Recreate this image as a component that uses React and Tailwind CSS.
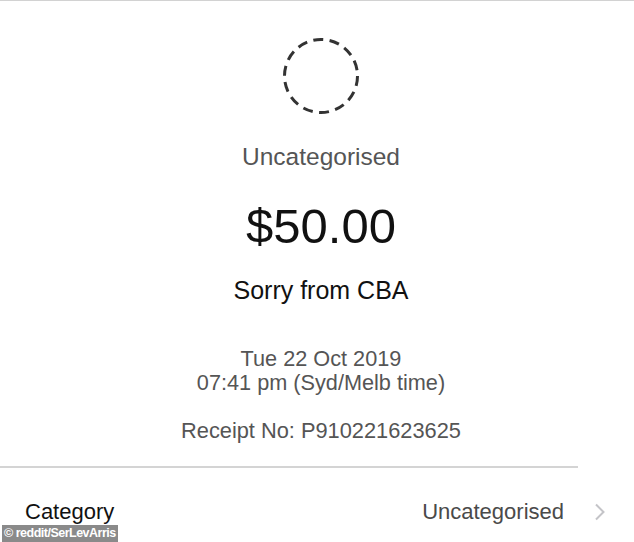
import React from "react";

const Row = ({ label, value }) => (
  <div className="flex items-center h-[28px] pl-[25px] pr-[28px]">
    <span className="text-[22px] leading-[28px] text-[#111]">{label}</span>
    <span className="ml-auto text-[22px] leading-[28px] text-[#4a4a4a]">{value}</span>
    <svg width="12" height="18" viewBox="0 0 12 18" className="ml-[30px]">
      <path d="M2 1.5 L9.5 9 L2 16.5" fill="none" stroke="#c4c4c8" strokeWidth="2" />
    </svg>
  </div>
);

const App = () => {
  return (
    <div
      className="relative w-[634px] h-[542px] overflow-hidden bg-white border-t border-[#d2d2d2]"
      style={{ fontFamily: '"Liberation Sans", Arial, sans-serif' }}
    >
      <div className="flex flex-col items-center pl-[8px]">
        {/* empty category icon */}
        <svg width="80" height="80" viewBox="0 0 80 80" className="mt-[35px]">
          <circle
            cx="40"
            cy="40"
            r="36.5"
            fill="none"
            stroke="#333"
            strokeWidth="3"
            strokeDasharray="10 6.4"
          />
        </svg>
        <div className="mt-[27px] text-[24.5px] leading-[28px] text-[#555]">Uncategorised</div>
        <div className="mt-[27px] text-[49px] leading-[56px] text-[#111]">$50.00</div>
        <div className="mt-[21px] text-[25px] leading-[30px] text-[#111]">Sorry from CBA</div>
        <div className="mt-[42px] text-[21.7px] leading-[24px] text-[#555] text-center">
          <div>Tue 22 Oct 2019</div>
          <div>07:41 pm (Syd/Melb time)</div>
        </div>
        <div className="mt-[24px] text-[21.8px] leading-[24px] text-[#555]">Receipt No: P910221623625</div>
      </div>

      <div className="mt-[23px] w-[578px] h-[2px] bg-[#d4d4d4]" />

      <div className="mt-[30px]">
        <Row label="Category" value="Uncategorised" />
      </div>

      {/* watermark */}
      <div className="absolute left-[2px] bottom-0 h-[17px] px-[2px] bg-[#8a8a8a] flex items-center">
        <span className="text-[12.5px] leading-none font-bold text-white tracking-[-0.5px] whitespace-nowrap">
          © reddit/SerLevArris
        </span>
      </div>
    </div>
  );
};

export default App;
